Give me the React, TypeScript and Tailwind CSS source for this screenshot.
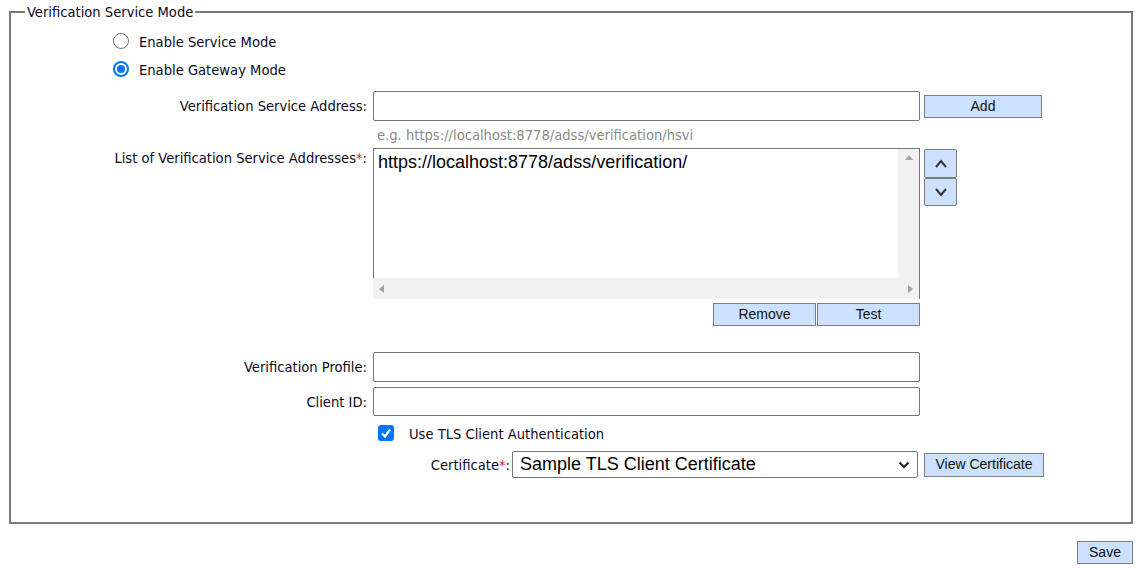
import React from "react";

const label = "font-['Tahoma','DejaVu_Sans_Condensed','DejaVu_Sans',sans-serif] text-[14.6px] text-[#0a0a23]";
const btn =
  "bg-[#cce0ff] border border-[#7d7d7d] font-['Liberation_Sans',Arial,sans-serif] text-[14px] text-[#111] flex items-center justify-center";
const field = "border border-[#767676] rounded-[2px] bg-white";

const Star = () => <span className="text-[#e0201c]">*</span>;

const Chevron = ({ up }: { up?: boolean }) => (
  <svg width="14" height="10" viewBox="0 0 14 10">
    <polyline
      points={up ? "2,8 7,2 12,8" : "2,2 7,8 12,2"}
      fill="none"
      stroke="#333"
      strokeWidth="2"
    />
  </svg>
);

const Row = ({ text, children, className }: { text: React.ReactNode; children: React.ReactNode; className?: string }) => (
  <div className={"flex items-center " + (className || "")}>
    <div className={label + " w-[362px] pr-[6px] text-right"}>{text}</div>
    {children}
  </div>
);

export default function App() {
  return (
    <div className="w-[1142px] h-[568px] bg-white">
      {/* Verification Service Mode group */}
      <fieldset className="mx-[9px] mt-[3px] border-2 border-[#7a7a7a] pb-[44px]">
        <legend className={label + " ml-[14px] px-[2px] leading-[17px]"}>Verification Service Mode</legend>

        <div className="mt-[7px] h-[28px] flex items-center pl-[102px]">
          <span className="w-[16px] h-[16px] rounded-full border border-[#767676] bg-white" />
          <span className={label + " ml-[10px] mt-[2px]"}>Enable Service Mode</span>
        </div>
        <div className="h-[28px] flex items-center pl-[102px]">
          <span className="w-[16px] h-[16px] rounded-full border-2 border-[#0075ff] bg-white flex items-center justify-center">
            <span className="w-[8px] h-[8px] rounded-full bg-[#0075ff]" />
          </span>
          <span className={label + " ml-[10px] mt-[2px]"}>Enable Gateway Mode</span>
        </div>

        <Row text="Verification Service Address:" className="mt-[8px]">
          <div className={field + " w-[547px] h-[30px]"} />
          <div className={btn + " ml-[4px] w-[118px] h-[23px]"}>Add</div>
        </Row>

        <div className="h-[27px] flex items-center pl-[366px]">
          <span className={label + " text-[#8a8a8a]"}>e.g. https://localhost:8778/adss/verification/hsvi</span>
        </div>

        <div className="flex items-start">
          <div className={label + " w-[362px] pr-[6px] text-right leading-[17px] mt-[1px]"}>
            List of Verification Service Addresses<Star />:
          </div>
          <div className="w-[547px] h-[151px] flex flex-col border-r border-[#767676]">
            <div className="flex flex-1 border-t border-l border-[#767676]">
              <div className="flex-1 bg-white px-[4px] pt-[2px] font-['Liberation_Sans',Arial,sans-serif] text-[18px] leading-[22px] text-black">
                https://localhost:8778/adss/verification/
              </div>
              <div className="w-[21px] bg-[#f1f1f1] flex justify-center pt-[6px]">
                <span className="w-0 h-0 border-x-[4px] border-x-transparent border-b-[5px] border-b-[#a3a3a3]" />
              </div>
            </div>
            <div className="h-[21px] bg-[#f1f1f1] flex items-center justify-between px-[6px]">
              <span className="w-0 h-0 border-y-[4px] border-y-transparent border-r-[5px] border-r-[#a3a3a3]" />
              <span className="w-0 h-0 border-y-[4px] border-y-transparent border-l-[5px] border-l-[#a3a3a3]" />
            </div>
          </div>
          <div className="ml-[4px] mt-[1px] flex flex-col">
            <div className="w-[33px] h-[29px] bg-[#cce0ff] border border-[#7d7d7d] rounded-[2px] flex items-center justify-center">
              <Chevron up />
            </div>
            <div className="w-[33px] h-[28px] bg-[#cce0ff] border border-[#7d7d7d] rounded-[2px] flex items-center justify-center">
              <Chevron />
            </div>
          </div>
        </div>

        <div className="mt-[4px] flex pl-[702px] gap-[1px]">
          <div className={btn + " w-[103px] h-[23px]"}>Remove</div>
          <div className={btn + " w-[103px] h-[23px]"}>Test</div>
        </div>

        <Row text="Verification Profile:" className="mt-[26px]">
          <div className={field + " w-[547px] h-[30px]"} />
        </Row>
        <Row text="Client ID:" className="mt-[5px]">
          <div className={field + " w-[547px] h-[29px]"} />
        </Row>

        <div className="h-[34px] flex items-center pl-[367px]">
          <span className="w-[16px] h-[16px] rounded-[3px] bg-[#0075ff] flex items-center justify-center">
            <svg width="12" height="12" viewBox="0 0 12 12">
              <polyline points="2,6.5 5,9.5 10,2.5" fill="none" stroke="white" strokeWidth="2.2" />
            </svg>
          </span>
          <span className={label + " ml-[15px] mt-[2px]"}>Use TLS Client Authentication</span>
        </div>

        <div className="mt-[1px] flex items-center">
          <div className={label + " w-[501px] pr-[2px] text-right"}>
            Certificate<Star />:
          </div>
          <div className={field + " w-[406px] h-[27px] flex items-center justify-between px-[7px]"}>
            <span className="font-['Liberation_Sans',Arial,sans-serif] text-[18px] text-black">Sample TLS Client Certificate</span>
            <svg width="12" height="8" viewBox="0 0 12 8">
              <polyline points="1.5,1.5 6,6 10.5,1.5" fill="none" stroke="#222" strokeWidth="2" />
            </svg>
          </div>
          <div className={btn + " ml-[6px] w-[120px] h-[24px]"}>View Certificate</div>
        </div>
      </fieldset>

      <div className="mt-[17px] mr-[9px] flex justify-end">
        <div className={btn + " w-[56px] h-[23px]"}>Save</div>
      </div>
    </div>
  );
}
